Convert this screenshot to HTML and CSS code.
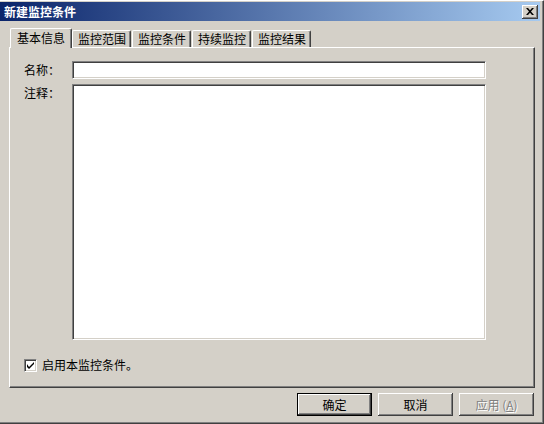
FILE: index.html
```html
<!DOCTYPE html>
<html>
<head>
    <title>新建监控条件</title>
    <link rel="stylesheet" href="styles.css">
</head>
<body>
    <div class="window">
        <div class="titlebar">
            <span class="title">新建监控条件</span>
            <button class="close-btn" title="关闭">
                <svg width="8" height="7" viewBox="0 0 8 7">
                    <path d="M0 0h2l2 2.2L6 0h2L5 3.5 8 7H6L4 4.8 2 7H0l3-3.5z" fill="#000"/>
                </svg>
            </button>
        </div>

        <div class="tabs">
            <div class="tab active">基本信息</div>
            <div class="tab">监控范围</div>
            <div class="tab">监控条件</div>
            <div class="tab">持续监控</div>
            <div class="tab">监控结果</div>
        </div>

        <div class="panel">
            <div class="form">
                <label class="label label-name">名称：</label>
                <input class="edit" type="text">
                <label class="label label-note">注释：</label>
                <textarea class="edit memo"></textarea>
            </div>

            <label class="check-row">
                <span class="checkbox">
                    <svg width="7" height="7" viewBox="0 0 7 7">
                        <path d="M0 2v3l2 2 5-5V-0L2 5z" fill="#000"/>
                    </svg>
                </span>
                启用本监控条件。
            </label>
        </div>

        <div class="buttons">
            <button class="btn default">确定</button>
            <button class="btn">取消</button>
            <button class="btn disabled">应用 (<u>A</u>)</button>
        </div>
    </div>
</body>
</html>
```

FILE: styles.css
```css
body {
    margin: 0;
    background: #d4d0c8;
    font-family: "Noto Sans CJK SC", "DejaVu Sans", sans-serif;
    font-size: 12px;
    color: #000;
}

.window {
    width: 544px;
    height: 424px;
    box-sizing: border-box;
    background: #d4d0c8;
    border-top: 1px solid #fff;
    border-right: 1px solid #404040;
    border-bottom: 1px solid #404040;
    box-shadow: inset -1px -1px 0 #808080;
    padding: 1px 3px 0 0;
    display: flex;
    flex-direction: column;
}

.titlebar {
    height: 19px;
    background: linear-gradient(to right, #0a246a, #a6caf0);
    display: flex;
    align-items: center;
    justify-content: space-between;
    padding: 0 2px 0 4px;
}

.title {
    color: #fff;
    font-weight: bold;
    line-height: 14px;
}

.close-btn {
    width: 16px;
    height: 14px;
    padding: 0;
    background: #d4d0c8;
    border: none;
    box-shadow: inset -1px -1px 0 #404040, inset 1px 1px 0 #fff, inset -2px -2px 0 #808080;
    display: flex;
    align-items: center;
    justify-content: center;
}

.tabs {
    display: flex;
    align-items: flex-end;
    margin: 7px 0 0 10px;
    height: 19px;
    position: relative;
    z-index: 1;
}

.tab {
    height: 16px;
    line-height: 16px;
    padding: 0 4px 0 5px;
    border-top: 1px solid #fff;
    border-left: 1px solid #fff;
    border-right: 1px solid #404040;
    box-shadow: inset -1px 0 0 #808080;
    border-radius: 2px 2px 0 0;
    margin-right: 1px;
    background: #d4d0c8;
}

.tab.active {
    height: 19px;
    line-height: 18px;
    padding: 0 6px 0 6px;
    margin-bottom: -1px;
    margin-right: 0;
}

.panel {
    margin-left: 9px;
    width: 526px;
    height: 341px;
    box-sizing: border-box;
    border-top: 1px solid #fff;
    border-left: 1px solid #fff;
    border-right: 1px solid #404040;
    border-bottom: 1px solid #404040;
    box-shadow: inset -1px -1px 0 #808080;
    padding: 13px 0 0 14px;
}

.form {
    display: grid;
    grid-template-columns: 48px 414px;
    row-gap: 5px;
}

.label {
    line-height: 14px;
}

.label-name {
    padding-top: 2px;
}

.label-note {
    padding-top: 2px;
}

.edit {
    box-sizing: border-box;
    margin: 0;
    background: #fff;
    border-top: 1px solid #808080;
    border-left: 1px solid #808080;
    border-right: 1px solid #fff;
    border-bottom: 1px solid #fff;
    box-shadow: inset 1px 1px 0 #404040, inset -1px -1px 0 #d4d0c8;
    font: inherit;
    outline: none;
}

input.edit {
    height: 18px;
}

.memo {
    height: 256px;
    resize: none;
}

.check-row {
    display: flex;
    align-items: center;
    gap: 5px;
    margin-top: 18px;
    line-height: 14px;
}

.checkbox {
    width: 13px;
    height: 13px;
    box-sizing: border-box;
    background: #fff;
    border-top: 1px solid #808080;
    border-left: 1px solid #808080;
    border-right: 1px solid #fff;
    border-bottom: 1px solid #fff;
    box-shadow: inset 1px 1px 0 #404040, inset -1px -1px 0 #d4d0c8;
    display: flex;
    align-items: center;
    justify-content: center;
}

.buttons {
    display: flex;
    justify-content: flex-end;
    gap: 6px;
    margin-top: 5px;
    padding-right: 6px;
}

.btn {
    width: 75px;
    height: 23px;
    padding: 0;
    background: #d4d0c8;
    border: none;
    font: inherit;
    color: #000;
    box-shadow: inset -1px -1px 0 #404040, inset 1px 1px 0 #fff, inset -2px -2px 0 #808080;
}

.btn.default {
    border: 1px solid #000;
    box-shadow: inset -1px -1px 0 #404040, inset 1px 1px 0 #fff, inset -2px -2px 0 #808080;
}

.btn.disabled {
    color: #808080;
    text-shadow: 1px 1px 0 #fff;
}
```
